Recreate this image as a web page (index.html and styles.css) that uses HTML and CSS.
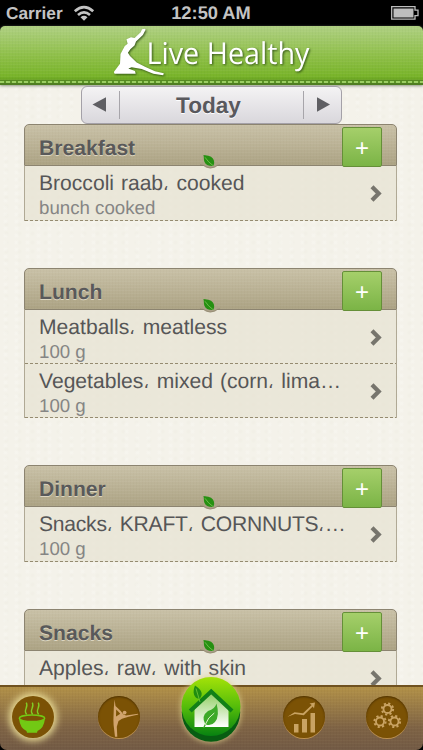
FILE: index.html
```html
<!DOCTYPE html>
<html lang="en">

<head>
    <meta charset="UTF-8">
    <meta name="viewport" content="width=device-width, initial-scale=1.0">
    <title>Live Healthy</title>
    <link rel="stylesheet" href="styles.css">
</head>

<body>
    <!-- shared shapes -->
    <svg class="defs" width="0" height="0">
        <symbol id="leaf" viewBox="0 0 20 15">
            <path d="M0 10.6Q4 10.8 6 13Q10 15.2 15 13Q17 10.8 20 10.6Z" fill="#aaa088" />
            <path d="M0 10.9Q4 11 6 13Q10 15.2 15 13Q17 11 20 10.9" fill="none" stroke="#8c8168" stroke-width=".8" />
            <path d="M3.4 1C8 1.4 12.3 1.9 13.8 6.2C14.6 8.6 14 10.5 13.2 12C9 12.3 5.4 10.9 4.3 7.5C3.6 5.2 4.1 3 3.4 1Z" fill="#269012" />
            <path d="M5 3.3Q8 8 13.3 11.8" fill="none" stroke="#8bcf62" stroke-width=".7" />
        </symbol>
        <symbol id="arrow" viewBox="0 0 12 17">
            <path d="M2 1.8L8.7 8.5L2 15.2" fill="none" stroke="#77756d" stroke-width="4.2" />
        </symbol>
        <symbol id="gear" viewBox="-8 -8 16 16">
            <circle r="4.3" fill="none" stroke="#c9a363" stroke-width="2" />
            <circle r="6" fill="none" stroke="#c9a363" stroke-width="2.1" stroke-dasharray="2.3 2.412" />
        </symbol>
    </svg>

    <div class="phone">
        <div class="status">
            <div class="carrier">
                <span>Carrier</span>
                <svg width="22" height="17" viewBox="0 0 22 17">
                    <path d="M1.8 6.2Q11 -1.8 20.2 6.2M5 10Q11 4.8 17 10" fill="none" stroke="#c3c3c3" stroke-width="2.7" />
                    <path d="M7.5 12.2Q11 9.3 14.5 12.2L11 15.8Z" fill="#c3c3c3" />
                </svg>
            </div>
            <div class="clock">12:50 AM</div>
            <svg class="battery" width="28" height="14" viewBox="0 0 28 14">
                <path d="M.7 .7H24V4.2H27V9.6H24V13.2H.7Z" fill="none" stroke="#bdbdbd" stroke-width="1.3" />
                <rect x="2.5" y="2.5" width="20" height="9" fill="#bdbdbd" />
            </svg>
        </div>

        <div class="header">
            <svg class="logo" width="423" height="54" viewBox="0 0 423 54">
                <path d="M145 2.7L145.6 3.8L142.9 8.9L136 15.5L134.5 19.5L130.3 23.3L127.9 26.7L130 30L136.7 36.5L145 40.8L155 45.2L163.8 47.3L163.2 49.3L153.3 47.8L141.7 43L131.7 41.3L128.3 42.5L135 45L135.7 47.7H114.6L113.8 46L120 37.7L120.5 28L124.8 20L127.6 17.7L126.5 13.3L131 11.2L134.6 12L140.7 6.3L142 3.3Z" fill="#fff" />
                <text x="146.5" y="38.3" textLength="163" lengthAdjust="spacingAndGlyphs">Live Healthy</text>
            </svg>
            <div class="stitch"></div>
        </div>

        <div class="datebar">
            <svg width="37" height="28" viewBox="0 0 37 28">
                <path d="M10.5 13.5L24 6.2V20.8Z" fill="#5f5f63" />
            </svg>
            <div class="day">Today</div>
            <svg width="37" height="28" viewBox="0 0 37 28">
                <path d="M26 13.5L13 6.2V20.8Z" fill="#5f5f63" />
            </svg>
        </div>

        <div class="meals">
            <div class="meal">
                <div class="meal-head">
                    <h2>Breakfast</h2>
                    <button type="button">+</button>
                    <svg class="leaf" width="20" height="15"><use href="#leaf" /></svg>
                </div>
                <div class="food">
                    <div class="info">
                        <div class="name">Broccoli raab<i>،</i> cooked</div>
                        <div class="amount">bunch cooked</div>
                    </div>
                    <svg width="12" height="17"><use href="#arrow" /></svg>
                </div>
            </div>

            <div class="meal">
                <div class="meal-head">
                    <h2>Lunch</h2>
                    <button type="button">+</button>
                    <svg class="leaf" width="20" height="15"><use href="#leaf" /></svg>
                </div>
                <div class="food">
                    <div class="info">
                        <div class="name">Meatballs<i>،</i> meatless</div>
                        <div class="amount">100 g</div>
                    </div>
                    <svg width="12" height="17"><use href="#arrow" /></svg>
                </div>
                <div class="food">
                    <div class="info">
                        <div class="name">Vegetables<i>،</i> mixed (corn<i>،</i> lima…</div>
                        <div class="amount">100 g</div>
                    </div>
                    <svg width="12" height="17"><use href="#arrow" /></svg>
                </div>
            </div>

            <div class="meal">
                <div class="meal-head">
                    <h2>Dinner</h2>
                    <button type="button">+</button>
                    <svg class="leaf" width="20" height="15"><use href="#leaf" /></svg>
                </div>
                <div class="food">
                    <div class="info">
                        <div class="name tight">Snacks<i>،</i> KRAFT<i>،</i> CORNNUTS<i>،</i>…</div>
                        <div class="amount">100 g</div>
                    </div>
                    <svg width="12" height="17"><use href="#arrow" /></svg>
                </div>
            </div>

            <div class="meal">
                <div class="meal-head">
                    <h2>Snacks</h2>
                    <button type="button">+</button>
                    <svg class="leaf" width="20" height="15"><use href="#leaf" /></svg>
                </div>
                <div class="food">
                    <div class="info">
                        <div class="name">Apples<i>،</i> raw<i>،</i> with skin</div>
                    </div>
                    <svg width="12" height="17"><use href="#arrow" /></svg>
                </div>
            </div>
        </div>

        <div class="tabbar">
            <div class="tab active">
                <svg width="42" height="42" viewBox="0 0 42 42">
                    <ellipse cx="20" cy="22.3" rx="12.7" ry="3.3" fill="none" stroke="#72c914" stroke-width="1.5" />
                    <path d="M7.2 23.5Q20 28.5 32.8 23.5Q32 32 25.5 35L25 36.8H15L14.5 35Q8 32 7.2 23.5Z" fill="#72c914" />
                    <path d="M14.7 18.3C10.5 14.5 17 11.5 14.3 6.6M20.7 18.3C16.5 14.5 23 11.5 20.3 6.6M26.7 18.3C22.5 14.5 29 11.5 26.3 6.6" fill="none" stroke="#82cc25" stroke-width="1.4" />
                </svg>
            </div>
            <div class="tab">
                <svg width="42" height="42" viewBox="0 0 42 42">
                    <path d="M16.6 3.5L17.5 10L22.5 14.7L25.5 18.5L28 19.5L40 17.7L40.3 18.6L30.6 20.8L24 22.8L20.5 25L18.8 30.7L19.3 40.7H17L15.6 29L15.4 24L15.8 12Z" fill="#d1a46d" />
                    <path d="M18.2 13.5L18 20.5L22.3 17.8Z" fill="#7b5205" />
                    <circle cx="26.6" cy="16.6" r="1.9" fill="#d1a46d" />
                </svg>
            </div>
            <div class="home">
                <svg width="66" height="72" viewBox="0 0 66 72">
                    <defs>
                        <linearGradient id="ball" x1="0" y1="0" x2="0" y2="1">
                            <stop offset="0" stop-color="#a4e208" />
                            <stop offset=".5" stop-color="#55bd0a" />
                            <stop offset="1" stop-color="#078211" />
                        </linearGradient>
                        <linearGradient id="wall" x1="0" y1="0" x2="0" y2="1">
                            <stop offset="0" stop-color="#8dcc5d" />
                            <stop offset="1" stop-color="#fff" />
                        </linearGradient>
                    </defs>
                    <circle cx="33" cy="40.5" r="29.2" fill="#075d12" />
                    <circle cx="33" cy="34.5" r="29.5" fill="url(#ball)" />
                    <path d="M33 20L50.5 34.5V55H16.5V34.5Z" fill="url(#wall)" />
                    <path d="M12.2 39L33.2 19.5L54 39" fill="none" stroke="#118017" stroke-width="4.2" />
                    <path d="M17 13.5C23 17.5 26 21.5 21.5 27C16 26.5 14 20.5 17 13.5Z" fill="#208c10" />
                    <path d="M18 16.5L22 30" stroke="#74c83b" stroke-width=".8" />
                    <path d="M38.5 31.5Q42 44 37 50Q33 54.5 28 52.5L26.3 56H25L27 51.5Q23 44 30 39Q37 37 38.5 31.5Z" fill="#3da928" />
                    <path d="M27 53Q30 45 36.3 41" fill="none" stroke="#dff3c9" stroke-width="1" />
                </svg>
            </div>
            <div class="tab">
                <svg width="42" height="42" viewBox="0 0 42 42">
                    <path d="M11 28H15.5V36.5H11ZM19 23H24V36.5H19ZM27.5 17H32V36.5H27.5Z" fill="#c9a363" />
                    <path d="M4.5 20.7L11.5 16.3L20 17.3L28.7 9L26.5 7.5L32 6.5L31 12.5L29.7 10.5L20.8 19.2L12 18Z" fill="#c9a363" />
                </svg>
            </div>
            <div class="tab">
                <svg width="42" height="42" viewBox="0 0 42 42">
                    <use href="#gear" x="14" y="5.5" width="15" height="15" />
                    <use href="#gear" x="6.5" y="18" width="15" height="15" />
                    <use href="#gear" x="21" y="18" width="15" height="15" />
                </svg>
            </div>
        </div>
    </div>
</body>

</html>
```
FILE: styles.css
```css
* {
    padding: 0;
    margin: 0;
    box-sizing: border-box;
}

html,
body {
    width: 100%;
    height: 100%;
    background: #000;
    overflow: hidden;
}

svg {
    display: block;
    flex: none;
}

.defs {
    position: absolute;
}

.phone {
    display: flex;
    flex-direction: column;
    width: 423px;
    height: 750px;
    font-family: "Liberation Sans", "DejaVu Sans", sans-serif;
    text-rendering: geometricPrecision;
}

.status {
    display: grid;
    grid-template-columns: 1fr auto 1fr;
    align-items: center;
    height: 26px;
    padding: 0 4px 0 6px;
    color: #c3c3c3;
    font-weight: bold;
}

.carrier {
    display: flex;
    align-items: center;
    gap: 10px;
    font-size: 17.3px;
}

.clock {
    font-size: 18.3px;
    margin-right: 3px;
}

.battery {
    justify-self: end;
}

.header {
    height: 59px;
    flex: none;
    display: flex;
    flex-direction: column;
    justify-content: space-between;
    border-radius: 5px 5px 0 0;
    background-image: repeating-linear-gradient(0deg, rgba(255, 255, 255, .04) 0 1px, transparent 1px 3px), repeating-linear-gradient(90deg, rgba(0, 60, 0, .025) 0 1px, transparent 1px 3px), linear-gradient(180deg, #b0d083 0%, #90c04b 50%, #79b42a 88%, #5b9419 100%);
    border-bottom: 2px solid #4f7e22;
    box-shadow: 0 1px 3px #8d9583;
    position: relative;
}

.logo {
    overflow: visible;
    filter: drop-shadow(1px 1px 1px rgba(30, 60, 10, .8));
}

.logo text {
    font-family: "Open Sans", "Noto Sans", sans-serif;
    font-size: 30px;
    fill: #fff;
}

.stitch {
    height: 3px;
    margin-bottom: 1px;
    flex: none;
    background-image: repeating-linear-gradient(90deg, #9bce63 0 4px, #5c9428 4px 6px);
    border-top: 1px solid #568b22;
}

.datebar {
    display: flex;
    align-items: center;
    flex: none;
    width: 261px;
    height: 38px;
    margin-left: 81px;
    margin-top: 1px;
    border: 1.5px solid #a4a1a8;
    border-radius: 6px;
    background-image: linear-gradient(180deg, #f4f3f4, #d9d7dc);
    position: relative;
    z-index: 1;
}

.day {
    flex: 1;
    height: 28px;
    line-height: 30px;
    padding-right: 6px;
    border: solid #a7a5aa;
    border-width: 0 1px;
    text-align: center;
    font-size: 22.6px;
    font-weight: bold;
    color: #59595d;
    text-shadow: 0 1px 0 #fff;
}

/* the paper reaches up behind the date bar */
.meals {
    flex: 1;
    min-height: 0;
    overflow: hidden;
    margin-top: -39px;
    padding: 39px 26px 0 24px;
    background-color: #f4f2ea;
    background-image: radial-gradient(circle, rgba(225, 220, 205, .1) 1px, transparent 3px), radial-gradient(circle, rgba(255, 255, 255, .2) 1px, transparent 3px);
    background-size: 13px 9px, 11px 7px;
}

.meal {
    margin-bottom: 47px;
}

.meal-head {
    display: flex;
    align-items: center;
    justify-content: space-between;
    width: 373px;
    height: 42px;
    padding: 4px 14px 0 14px;
    border: 1px solid #8c8470;
    border-radius: 5px 5px 0 0;
    background-image: repeating-linear-gradient(0deg, rgba(255, 255, 255, .04) 0 1px, transparent 1px 3px), repeating-linear-gradient(90deg, rgba(80, 60, 20, .02) 0 1px, transparent 1px 3px), linear-gradient(180deg, #c9c1a7, #aca384);
    position: relative;
}

.meal-head h2 {
    font-size: 21.1px;
    line-height: 24px;
    color: #59595a;
    padding-top: 4px;
    text-shadow: 0 1px 0 #ddd6c1;
}

.meal-head button {
    width: 40px;
    height: 40px;
    flex: none;
    background-image: linear-gradient(180deg, #a5cf6a, #7bb446);
    border: 1px solid #658f38;
    border-radius: 2px;
    font-family: "Liberation Sans", sans-serif;
    font-size: 24px;
    line-height: 40px;
    color: #fff;
    position: relative;
    z-index: 1;
}

/* sits over the seam between head and first row */
.leaf {
    position: absolute;
    left: 175px;
    bottom: -4px;
}

.food {
    display: flex;
    align-items: center;
    justify-content: space-between;
    width: 373px;
    height: 54px;
    padding: 0 14px 0 14px;
    background-color: rgba(231, 227, 211, .75);
    border-left: 1px solid #b0a995;
    border-right: 1px solid #b0a995;
    background-image: repeating-linear-gradient(90deg, #958b70 0 3px, transparent 3px 5px);
    background-size: 100% 1px;
    background-position: 0 100%;
    background-repeat: no-repeat;
}

.food:last-child {
    height: 55px;
}

.food + .food:last-child {
    height: 54px;
}

.info {
    align-self: flex-start;
    white-space: nowrap;
}

.name {
    height: 30px;
    line-height: 35px;
    font-size: 21.1px;
    word-spacing: 1px;
    color: #565657;
}

.name.tight {
    letter-spacing: -.25px;
}

.name i {
    display: inline-block;
    width: 6.5px;
    font: 17px "DejaVu Sans", sans-serif;
    line-height: 20px;
}

.amount {
    line-height: 24px;
    font-size: 18.7px;
    color: #858584;
}

.tabbar {
    display: flex;
    align-items: center;
    flex: none;
    height: 65px;
    padding: 0 0 3px 12px;
    border-top: 2px solid #705220;
    border-radius: 0 0 7px 7px;
    background-image: repeating-linear-gradient(0deg, rgba(255, 235, 180, .03) 0 1px, transparent 1px 3px), repeating-linear-gradient(90deg, rgba(50, 20, 0, .03) 0 1px, transparent 1px 3px), linear-gradient(180deg, #b29148, #7e6345 65%, #725a45);
    position: relative;
    z-index: 2;
}

.tab {
    width: 42px;
    height: 42px;
    margin-right: 41px;
    border-radius: 50%;
    background-color: #7b5205;
    box-shadow: inset 0 1px 2px #4e3200, 0 1px 0 #bd914f;
}

.tab.active {
    margin-right: 44px;
    box-shadow: 0 0 7px 3px #e7d993;
}

.home {
    width: 66px;
    height: 72px;
    margin: -18px 39px 0 -3px;
    filter: drop-shadow(0 0 3px #e0d18c);
}
```
